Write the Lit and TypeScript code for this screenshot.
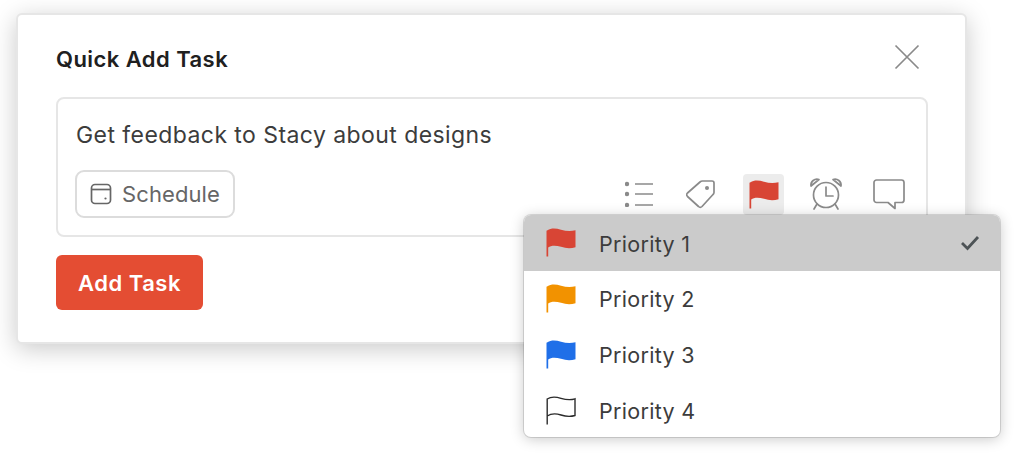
import { LitElement, html, css, svg } from "lit";
import { customElement } from "lit/decorators.js";

const flag = (fill: string) => svg`<svg class="flag" width="30" height="30" viewBox="0 0 30 30"><path d="M1.500 3.300C5 .9 10 1.200 15 2.800 20 4.300 25 4.400 29.500 3.300V20.200C25 21.600 20 21.500 15 19.800 10 18.200 5 18.200 2.200 20.400V29.500H.5V3.800Z" fill="${fill}"/></svg>`;
const flagOutline = svg`<svg class="flag" width="30" height="30" viewBox="0 0 30 30"><path d="M1.200 29.500V4C5 1.500 10 1.800 15 3.300 20 4.800 25 5 29 3.800V20.500C25 21.700 20 21.600 15 20 10 18.400 5 18.500 1.200 21" fill="none" stroke="#2b2b2b" stroke-width="1.400"/></svg>`;

@customElement("app-root")
export class AppRoot extends LitElement {
  static styles = css`
    :host { display: block; width: 1024px; height: 475px; overflow: hidden; background: #fff; font-family: Inter, "Liberation Sans", sans-serif; -webkit-font-smoothing: antialiased; }
    .stage { position: relative; padding: 13px 0 0 16px; height: 462px; }
    .card { box-sizing: border-box; width: 951px; height: 331px; background: #fff; border: 2px solid #e6e6e6; border-radius: 6px; padding: 0 37px 0 38px; box-shadow: 0 5px 24px rgba(0,0,0,.21); display: flex; flex-direction: column; }
    .head { height: 82px; display: flex; align-items: center; justify-content: space-between; flex: none; }
    h1 { margin: 0; font-size: 22px; font-weight: 600; color: #202020; letter-spacing: .44px; position: relative; top: 3px; }
    .close { display: block; margin-right: 8px; position: relative; top: 1px; }
    .box { box-sizing: border-box; height: 140px; border: 2px solid #e6e6e6; border-radius: 8px; padding: 0 18px 0 17px; flex: none; }
    .text { font-size: 23px; color: #3c3c3c; height: 71px; line-height: 72px; padding-left: 1px; white-space: nowrap; letter-spacing: .43px; }
    .tools { display: flex; align-items: center; justify-content: space-between; height: 48px; }
    .chip { box-sizing: border-box; width: 160px; height: 48px; border: 2px solid #dcdcdc; border-radius: 9px; display: flex; align-items: center; gap: 10px; padding-left: 13px; font-size: 22px; color: #666; letter-spacing: .1px; }
    .icons { display: flex; align-items: center; }
    .ib { width: 41px; height: 41px; display: flex; align-items: center; justify-content: center; border-radius: 4px; margin-left: 21px; }
    .ib.on { background: #ececec; }
    .add { box-sizing: border-box; margin-top: 18px; width: 147px; height: 55px; background: #e44d33; color: #fff; border: 0; border-radius: 6px; font: 600 22px Inter, "Liberation Sans", sans-serif; letter-spacing: .5px; flex: none; padding: 0; }
    .menu { position: absolute; left: 524px; top: 215px; width: 476px; height: 222px; background: #fff; border-radius: 7px; overflow: hidden; box-shadow: 0 0 0 1px rgba(0,0,0,.12), 0 2px 14px rgba(0,0,0,.22); }
    .row { height: 56px; display: flex; align-items: center; padding-left: 22px; padding-right: 20px; font-size: 21.500px; color: #3c3c3c; letter-spacing: .3px; }
    .row.sel { background: #cbcbcb; }
    .row span { margin-left: 23px; flex: 1; }
    .row.sel span { padding-top: 1px; }
    .row .flag { margin-top: -2px; }
    .flag { display: block; }
  `;
  render() {
    return html`<div class="stage">
      <div class="card">
        <div class="head"><h1>Quick Add Task</h1>
          <svg class="close" width="26" height="26" viewBox="0 0 26 26"><path d="M1.500 1.500 24.500 24.500M24.500 1.500 1.500 24.500" stroke="#8a8a8a" stroke-width="1.700" fill="none"/></svg>
        </div>
        <div class="box">
          <div class="text">Get feedback to Stacy about designs</div>
          <div class="tools">
            <div class="chip">
              <svg width="22" height="22" viewBox="0 0 22 22" fill="none" stroke="#666" stroke-width="1.700"><rect x="1.500" y="1.500" width="19" height="19" rx="3.500"/><path d="M1.500 6.500H20.500"/><circle cx="15.500" cy="15.500" r="1.100" fill="#666" stroke="none"/></svg>
              Schedule
            </div>
            <div class="icons">
              <div class="ib"><svg width="30" height="26" viewBox="1 0 30 26" fill="none" stroke="#8a8a8a" stroke-width="1.600"><circle cx="3" cy="3" r="2.200" fill="#8a8a8a" stroke="none"/><circle cx="3" cy="13" r="2.200" fill="#8a8a8a" stroke="none"/><circle cx="3" cy="24" r="2.200" fill="#8a8a8a" stroke="none"/><path d="M11 3H29M11 13H29M11 24H29"/></svg></div>
              <div class="ib"><svg width="32" height="32" viewBox="1.500 0 32 32" fill="none" stroke="#8a8a8a" stroke-width="1.700"><path d="M18 3H27.500A2 2 0 0 1 29.500 5V14.500A3 3 0 0 1 28.500 16.500L17.500 28.500A2.500 2.500 0 0 1 14 28.500L3 18.500A2.500 2.500 0 0 1 3 15L15.500 4A4 4 0 0 1 18 3Z" stroke-linejoin="round"/><circle cx="22.500" cy="10" r="2" fill="#8a8a8a" stroke="none"/></svg></div>
              <div class="ib on">${flag("#d84535")}</div>
              <div class="ib"><svg width="34" height="34" viewBox="0 0 34 34" fill="none" stroke="#8a8a8a" stroke-width="1.700"><circle cx="17" cy="18" r="12.500"/><path d="M17 10V19H24M2 9A6 6 0 0 1 10 2.500ZM32 9A6 6 0 0 0 24 2.500ZM8 27 5 32M26 27 29 32" stroke-linecap="round" stroke-linejoin="round"/></svg></div>
              <div class="ib"><svg width="34" height="32" viewBox="0 0 34 32" fill="none" stroke="#8a8a8a" stroke-width="1.700"><path d="M5.500 2H30.500A2.500 2.500 0 0 1 33 4.500V22A2.500 2.500 0 0 1 30.500 24.500H24V30.500L17 24.500H5.500A2.500 2.500 0 0 1 3 22V4.500A2.500 2.500 0 0 1 5.500 2Z" stroke-linejoin="round"/></svg></div>
            </div>
          </div>
        </div>
        <button class="add">Add Task</button>
      </div>
      <div class="menu">
        <div class="row sel">${flag("#d84535")}<span>Priority 1</span><svg width="20" height="16" viewBox="0 0 20 16" fill="none" stroke="#4d5356" stroke-width="2.800"><path d="M2 8 7.500 13.500 18 2"/></svg></div>
        <div class="row">${flag("#f29200")}<span>Priority 2</span></div>
        <div class="row">${flag("#1f6fe8")}<span>Priority 3</span></div>
        <div class="row">${flagOutline}<span>Priority 4</span></div>
      </div>
    </div>`;
  }
}
